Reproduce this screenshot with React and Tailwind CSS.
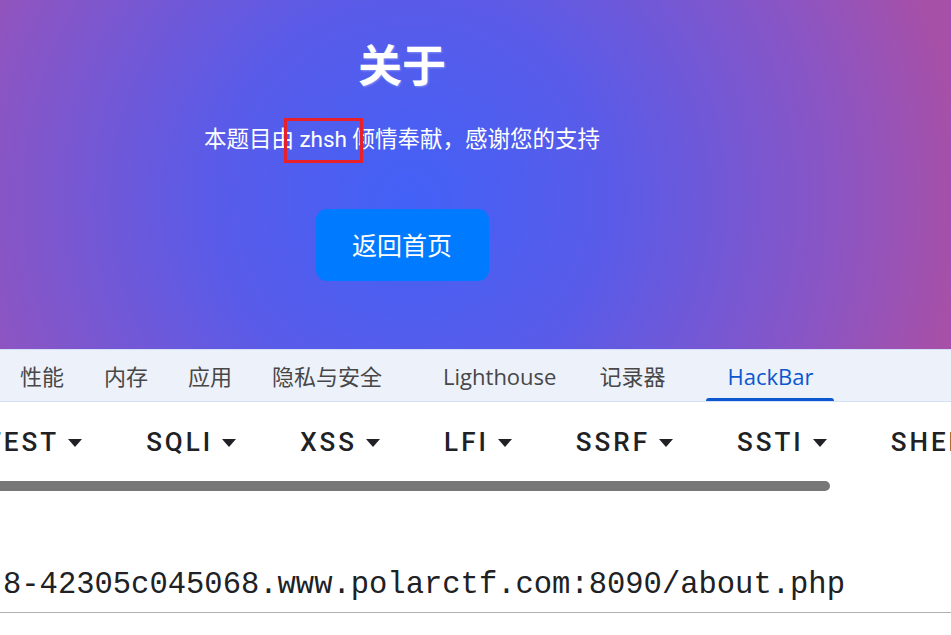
import React from 'react';

const tabs = [
    { label: '性能', extra: '' },
    { label: '内存', extra: '' },
    { label: '应用', extra: '' },
    { label: '隐私与安全', extra: '' },
    { label: 'Lighthouse', extra: 'ml-[21px]' },
    { label: '记录器', extra: 'ml-[3px]' },
];

const menus = ['TEST', 'SQLI', 'XSS', 'LFI', 'SSRF', 'SSTI', 'SHELL'];

const Caret = () => (
    <svg width="14" height="8" viewBox="0 0 14 8" className="shrink-0">
        <path d="M0 0 L14 0 L7 8 Z" fill="#202124" />
    </svg>
);

const App = () => {
    return (
        <div className="w-[951px] h-[635px] overflow-hidden bg-white font-['Roboto','Noto_Sans_CJK_SC',sans-serif]">
            {/* hero */}
            <div className="h-[349px] bg-[radial-gradient(circle_at_410px_200px,#4361f6_0%,#4a5ff2_12%,#5a5be8_35%,#8a55c4_73%,#a650a8_95%)]">
                <div className="w-[804px] flex flex-col items-center pt-[45px] text-white">
                    <h1 className="text-[44px] leading-[44px] font-bold [text-shadow:1px_1px_2px_rgba(180,200,255,0.5)]">关于</h1>
                    <p className="relative mt-[34px] text-[22.5px] leading-[33px]">
                        本题目由 zhsh 倾情奉献，感谢您的支持
                        <span className="absolute left-[80px] top-[-5px] w-[79px] h-[45px] border-[3px] border-[#e8202a]"></span>
                    </p>
                    <button className="mt-[53px] w-[173px] h-[72px] pt-[4px] rounded-[11px] bg-[#007bff] text-[25px] text-white">
                        返回首页
                    </button>
                </div>
            </div>

            {/* devtools tabs */}
            <div className="h-[53px] border-t border-b border-[#d3e0f7] bg-[#edf1fa] flex items-stretch font-['Open_Sans','Noto_Sans_CJK_SC',sans-serif] text-[22px] text-[#474747]">
                {tabs.map(({ label, extra }) => (
                    <div key={label} className={`px-[20px] pt-[2px] flex items-center ${extra}`}>{label}</div>
                ))}
                <div className="relative ml-[21px] w-[128px] pt-[2px] flex items-center justify-center text-[#0b57d0]">
                    HackBar
                    <span className="absolute bottom-0 left-0 w-full h-[3px] rounded-t-[3px] bg-[#0b57d0]"></span>
                </div>
            </div>

            {/* hackbar toolbar */}
            <div className="h-[79px] overflow-hidden">
                <div className="flex items-center h-full pt-[2px] ml-[-47px] whitespace-nowrap">
                    {menus.map((m) => (
                        <div key={m} className="flex items-center gap-[9px] px-[32px] text-[26px] font-medium tracking-[3px] text-[#202124]">
                            <span>{m}</span>
                            <Caret />
                        </div>
                    ))}
                </div>
            </div>
            <div className="h-[10px] w-[830px] rounded-r-full bg-[#777777]"></div>

            {/* url input */}
            <div className="pt-[76px] border-b border-[#b0b0b0] pb-[9px]">
                <div className="pl-[3px] font-['Liberation_Mono',monospace] text-[30.5px] leading-[36px] text-[#202124] whitespace-nowrap">
                    8-42305c045068.www.polarctf.com:8090/about.php
                </div>
            </div>
        </div>
    );
};

export default App;
